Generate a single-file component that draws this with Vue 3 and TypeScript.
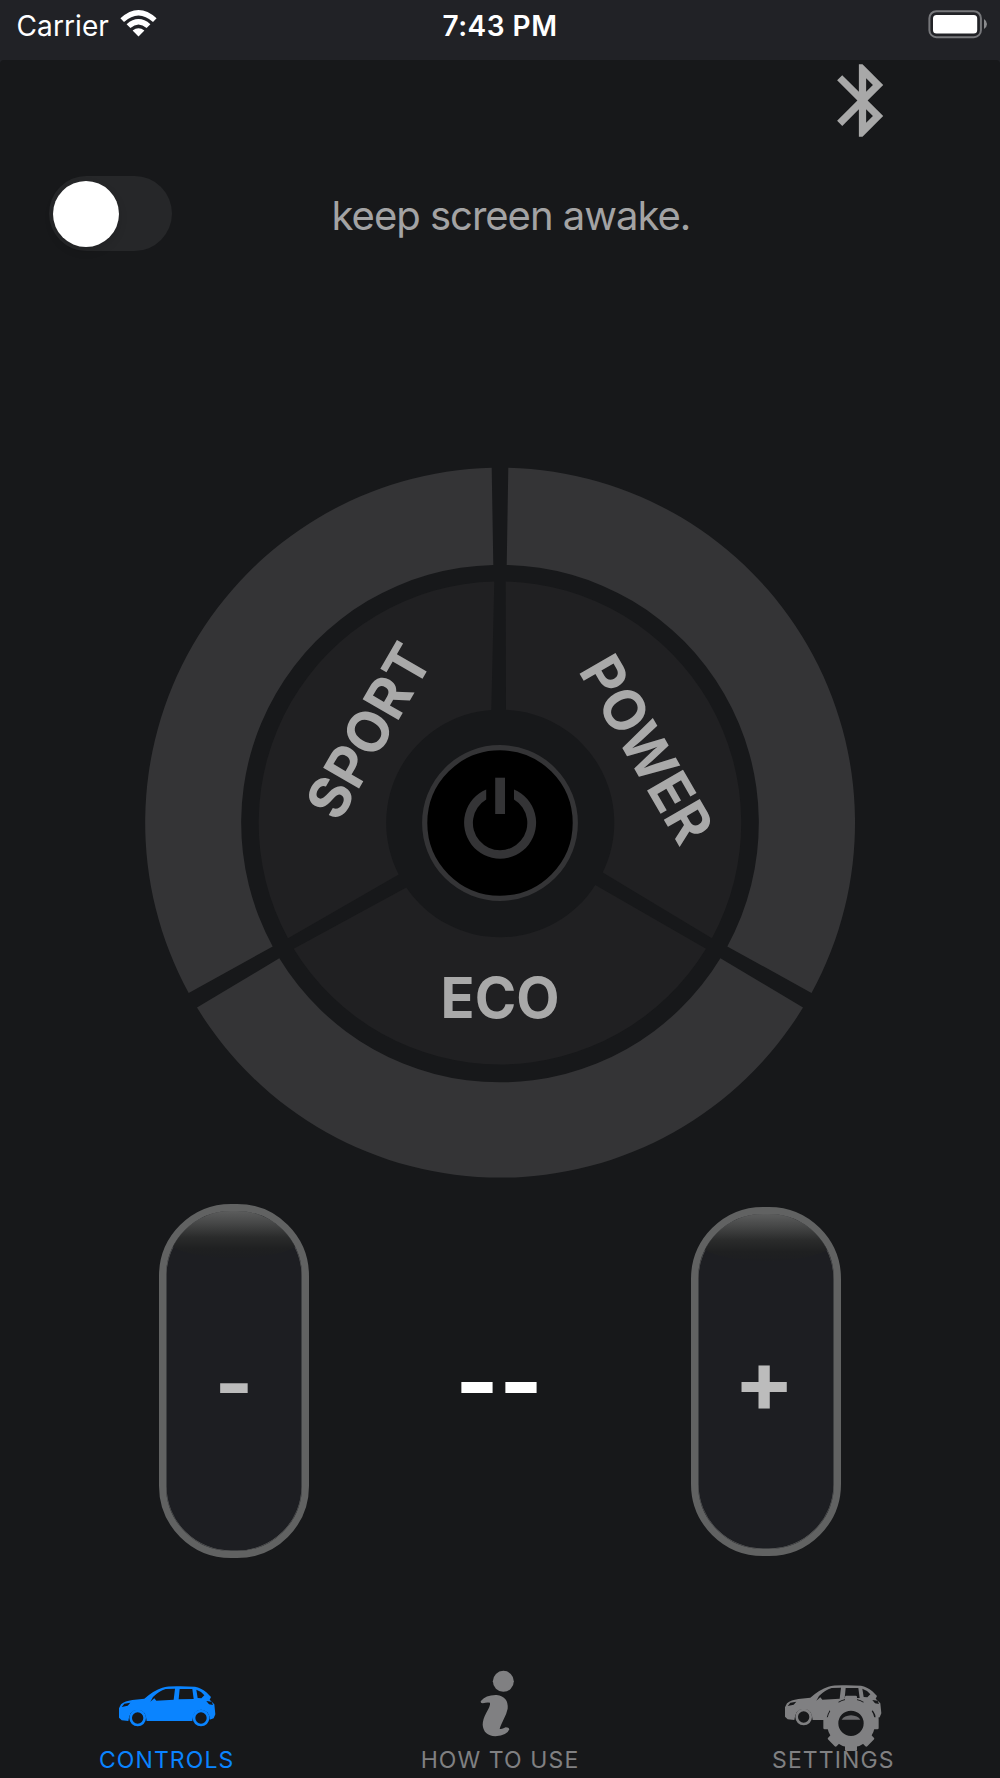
<script setup lang="ts">
import { ref } from 'vue'

interface Mode {
  name: string
  x: number
  y: number
  angle: number
  length: number
  ring: string
  sector: string
}

interface Tab {
  id: 'controls' | 'help' | 'settings'
  label: string
}

const awake = ref(false)
const activeTab = ref<Tab['id']>('controls')

const modes: Mode[] = [
  {
    name: 'SPORT', x: 368.5, y: 731, angle: -60, length: 190,
    ring: 'M491.7 467.8A355 355 0 0 0 188.7 993L272.7 946.4A258 258 0 0 1 493.3 564.9Z',
    sector: 'M494.3 581.5A241.5 241.5 0 0 0 288 938.3L398.7 874.4A113 113 0 0 1 491.3 710Z',
  },
  {
    name: 'POWER', x: 646.8, y: 749, angle: 60, length: 205,
    ring: 'M508.3 467.8A355 355 0 0 1 811.5 993L727.3 946.4A258 258 0 0 0 506.7 564.9Z',
    sector: 'M505.7 581.5A241.5 241.5 0 0 1 711.9 938.3L602.7 872.5A113 113 0 0 0 506 709.8Z',
  },
  {
    name: 'ECO', x: 500, y: 997.3, angle: 0, length: 119,
    ring: 'M803 1007.6A355 355 0 0 1 197 1007.6L279.3 958.2A258 258 0 0 0 720.4 958.2Z',
    sector: 'M706 948.7A241.5 241.5 0 0 1 293.7 948.7L406.3 887.4A113 113 0 0 0 595.3 885.1Z',
  },
]

const tabs: Tab[] = [
  { id: 'controls', label: 'CONTROLS' },
  { id: 'help', label: 'HOW TO USE' },
  { id: 'settings', label: 'SETTINGS' },
]

const carPath =
  'M56 142L62 130Q74 120 96 117L132 113Q160 88 186 80Q205 75 240 76L284 77Q302 80 318 94L332 108L328 116L342 130L345 160L340 172L328 176Q328 148 302 146Q277 148 276 180L139 180Q138 148 112 147Q86 148 84 180L64 178L56 170Z' +
  'M150 122L158 108Q176 90 196 84L224 83L220 116L168 119L162 112Z' +
  'M238 84L276 84L280 114L235 115Z' +
  'M288 86Q302 90 312 103L303 112L292 111Z' +
  'M64 138L72 128L90 125L82 134Z' +
  'M318 120L334 122L338 132L326 130Z'

const gearTeeth = [0, 45, 90, 135, 180, 225, 270, 315]
</script>

<template>
  <div class="app">
    <header class="status">
      <div class="carrier">
        <span>Carrier</span>
        <svg class="wifi" viewBox="0 0 37 27" width="37" height="27">
          <path d="M0.4 8.3Q18.5-8.3 36.6 8.3L33 12Q18.5-1.2 4 12Z" />
          <path d="M6.6 14.2Q18.5 4 30.4 14.2L26.6 18Q18.5 11 10.4 18Z" />
          <path d="M12.6 20.4Q18.5 16 24.4 20.4L18.5 26.6Z" />
        </svg>
      </div>
      <span class="clock">7:43 PM</span>
      <svg class="battery" viewBox="0 0 60 30" width="60" height="30">
        <rect x="1.4" y="2.2" width="51.5" height="26" rx="7" fill="none" stroke="#77787b" stroke-width="2" />
        <rect x="5" y="6" width="44.2" height="18.4" rx="3.5" fill="#fff" />
        <path d="M56 10Q59 12 59 15T56 20Z" fill="#8a8b8d" />
      </svg>
    </header>

    <main class="content">
      <div class="link">
        <svg viewBox="0 0 24 24" width="87" height="87" fill="#a8a8a8">
          <path d="M17.71 7.71L12 2h-1v7.59L6.41 5 5 6.41 10.59 12 5 17.59 6.41 19 11 14.41V22h1l5.71-5.71-4.3-4.29 4.3-4.29zM13 5.83l1.88 1.88L13 9.59V5.83zm1.88 10.46L13 18.17v-3.76l1.88 1.88z" />
        </svg>
      </div>

      <div class="awake">
        <button class="toggle" :class="{ on: awake }" aria-label="keep screen awake" @click="awake = !awake">
          <span class="knob"></span>
        </button>
        <span class="awake-label">keep screen awake.</span>
      </div>

      <svg class="dial" viewBox="144 466 712 714" width="712" height="714">
        <g v-for="m in modes" :key="m.name">
          <path :d="m.ring" fill="#343436" />
          <path :d="m.sector" fill="#202022" />
          <text
            class="mode"
            :transform="`translate(${m.x} ${m.y}) rotate(${m.angle})`"
            y="20.6"
            text-anchor="middle"
            :textLength="m.length"
            lengthAdjust="spacingAndGlyphs"
          >{{ m.name }}</text>
        </g>
        <circle cx="500" cy="823" r="75.3" fill="#000" stroke="#343436" stroke-width="5.2" />
        <rect x="495.2" y="777.7" width="9.8" height="36.3" fill="#343436" />
        <path d="M486.2 789.5A36 36 0 1 0 514 789.5V799.6A27.2 27.2 0 1 1 486.2 799.6Z" fill="#343436" />
      </svg>

      <div class="level">
        <button class="step minus"><span>-</span></button>
        <span class="value">--</span>
        <button class="step plus"><span>+</span></button>
      </div>
    </main>

    <nav class="tabs">
      <button
        v-for="t in tabs"
        :key="t.id"
        class="tab"
        :class="[t.id, { active: t.id === activeTab }]"
        @click="activeTab = t.id"
      >
        <svg v-if="t.id === 'controls'" viewBox="50 60 300 210" width="100" height="70">
          <path :d="carPath" fill="currentColor" fill-rule="evenodd" />
          <circle cx="112" cy="171" r="21" fill="none" stroke="currentColor" stroke-width="8" />
          <circle cx="302" cy="171" r="21" fill="none" stroke="currentColor" stroke-width="8" />
        </svg>
        <svg v-else-if="t.id === 'help'" viewBox="150 30 300 240" width="100" height="80">
          <circle cx="310" cy="94" r="31.5" fill="currentColor" />
          <path
            d="M242 154Q258 134 290 135Q326 140 323 176Q320 192 309 212Q300 231 299 236Q303 240 317 232Q327 232 328 238Q322 256 286 259Q250 256 248 224Q248 208 259 188Q272 166 270 158Q262 156 248 160Q241 160 242 154Z"
            fill="currentColor"
          />
        </svg>
        <svg v-else viewBox="98 60 300 214" width="100" height="71.33">
          <g transform="translate(48 0)">
            <path :d="carPath" fill="currentColor" fill-rule="evenodd" />
            <circle cx="112" cy="171" r="21" fill="none" stroke="currentColor" stroke-width="8" />
          </g>
          <circle cx="302" cy="190" r="75" fill="#17181a" />
          <g fill="currentColor">
            <rect v-for="a in gearTeeth" :key="a" x="284" y="107" width="36" height="36" rx="4" :transform="`rotate(${a} 302 190)`" />
          </g>
          <circle cx="302" cy="190" r="55" fill="none" stroke="currentColor" stroke-width="34" />
          <path d="M274 179Q282 167 302 166Q322 167 330 179Z" fill="currentColor" opacity="0.8" />
        </svg>
        <span>{{ t.label }}</span>
      </button>
    </nav>
  </div>
</template>

<style>
body {
  margin: 0;
  background: #17181a;
}
</style>

<style scoped>
.app {
  width: 1000px;
  height: 1778px;
  display: flex;
  flex-direction: column;
  overflow: hidden;
  background: #212226;
  color: #fff;
  font-family: Inter, 'Liberation Sans', sans-serif;
}

button {
  border: 0;
  padding: 0;
  margin: 0;
  background: none;
  font: inherit;
  color: inherit;
}

.status {
  height: 60px;
  flex: none;
  display: grid;
  grid-template-columns: 1fr auto 1fr;
  padding: 0 12px;
  box-sizing: border-box;
  font-size: 28px;
  line-height: 53px;
}

.carrier {
  display: flex;
  gap: 11px;
  padding-left: 4.5px;
  letter-spacing: 0.1px;
}

.wifi {
  margin-top: 10px;
  fill: #fff;
}

.clock {
  font-weight: 600;
  letter-spacing: 0.5px;
}

.battery {
  justify-self: end;
  margin-top: 9px;
}

.content {
  flex: 1;
  display: flex;
  flex-direction: column;
  align-items: center;
  background: #17181a;
  border-radius: 4px 4px 0 0;
}

.link {
  width: 100%;
  height: 116px;
  display: flex;
  justify-content: flex-end;
  padding-right: 94px;
  box-sizing: border-box;
}

.link svg {
  margin-top: -3px;
}

.awake {
  width: 100%;
  height: 75px;
  display: flex;
  align-items: center;
  gap: 160px;
  padding-left: 48.5px;
  box-sizing: border-box;
}

.toggle {
  width: 123px;
  height: 75px;
  padding: 0 4px;
  border-radius: 38px;
  background: #262729;
  display: flex;
  align-items: center;
}

.toggle.on {
  justify-content: flex-end;
  background: #0a84ff;
}

.knob {
  width: 66px;
  height: 66px;
  border-radius: 50%;
  background: #fff;
  box-shadow: 0 4px 10px rgba(0, 0, 0, 0.12);
}

.awake-label {
  font-size: 40px;
  line-height: 50px;
  margin-top: 4px;
  color: #a3a3a4;
  letter-spacing: -1px;
  white-space: nowrap;
}

.dial {
  margin-top: 215px;
  flex: none;
  display: block;
}

.mode {
  font-size: 57px;
  font-weight: 700;
  fill: #a9a9a9;
}

.level {
  width: 682px;
  height: 354px;
  margin: 24px 0 0 0;
  display: flex;
  justify-content: space-between;
  align-items: center;
}

.step {
  position: relative;
  width: 150px;
  box-sizing: border-box;
  border: 7px solid #616262;
  border-radius: 72px;
  background: #1d1e22;
  box-shadow: inset 0 0 0 0.5px #616262;
  color: #bcbcbc;
  overflow: hidden;
  font-weight: 700;
  line-height: 90px;
}

.minus {
  height: 354px;
  padding-top: 3px;
  font-size: 83px;
}

.plus {
  height: 349px;
  padding: 0 4px 0 0;
  font-size: 86px;
}

.plus span {
  display: inline-block;
  transform: scaleX(1.05);
}

/* glossy highlight at the top of each pill */
.step::before {
  content: '';
  position: absolute;
  left: 0;
  right: 0;
  top: 0;
  height: 47px;
  border-radius: 0 0 50% 50% / 0 0 20px 20px;
  background: linear-gradient(#5c5d5d, #474848 25%, #2a2b2b 56%, #1f2021 80%, #1d1e21);
}

.value {
  font-size: 94px;
  font-weight: 700;
  line-height: 90px;
  margin: 2px 0 0 -2px;
}

.tabs {
  height: 126px;
  flex: none;
  display: grid;
  grid-template-columns: repeat(3, 1fr);
  background: #17181a;
}

.tab {
  display: flex;
  flex-direction: column;
  align-items: center;
  justify-content: flex-end;
  color: #808082;
  font-size: 23px;
  line-height: 36px;
  letter-spacing: 1.1px;
}

.tab svg {
  margin-bottom: -9px;
}

.tab.help svg {
  margin-bottom: 2px;
}

.tab.active {
  color: #0a84ff;
}
</style>
